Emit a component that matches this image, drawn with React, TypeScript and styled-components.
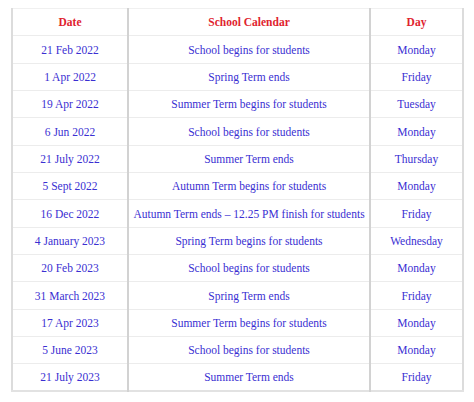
import React from "react";
import styled, { createGlobalStyle } from "styled-components";

const Global = createGlobalStyle`
  html, body { margin: 0; padding: 0; background: #ffffff; }
  body { font-family: "Liberation Serif", "DejaVu Serif", serif; }
`;

const Page = styled.div`
  padding: 8px 0 0 11px;
`;

const Table = styled.table`
  border-collapse: collapse;
  width: 451px;
  table-layout: fixed;
  border-left: 2px solid #dcdcdc;
  border-right: 2px solid #dcdcdc;
  border-top: 1px solid #f0f0f0;
  border-bottom: 2px solid #e2e2e2;
`;

const Row = styled.tr`
  height: 27.35px;
  border-bottom: 1px solid #ececec;
`;

const Cell = styled.td<{ $head?: boolean }>`
  padding: 0 4px;
  text-align: center;
  vertical-align: middle;
  font-size: 11.5px;
  white-space: nowrap;
  color: ${(p) => (p.$head ? "#e0232e" : "#3a2fd2")};
  font-weight: ${(p) => (p.$head ? 700 : 400)};
  & + & { border-left: 2px solid #d2d2d2; }
`;

const rows: [string, string, string][] = [
  ["21 Feb 2022", "School begins for students", "Monday"],
  ["1 Apr 2022", "Spring Term ends", "Friday"],
  ["19 Apr 2022", "Summer Term begins for students", "Tuesday"],
  ["6 Jun 2022", "School begins for students", "Monday"],
  ["21 July 2022", "Summer Term ends", "Thursday"],
  ["5 Sept 2022", "Autumn Term begins for students", "Monday"],
  ["16 Dec 2022", "Autumn Term ends – 12.25 PM finish for students", "Friday"],
  ["4 January 2023", "Spring Term begins for students", "Wednesday"],
  ["20 Feb 2023", "School begins for students", "Monday"],
  ["31 March 2023", "Spring Term ends", "Friday"],
  ["17 Apr 2023", "Summer Term begins for students", "Monday"],
  ["5 June 2023", "School begins for students", "Monday"],
  ["21 July 2023", "Summer Term ends", "Friday"],
];

export default function App() {
  return (
    <Page>
      <Global />
      <Table>
        <colgroup>
          <col style={{ width: 116 }} />
          <col style={{ width: 242 }} />
          <col style={{ width: 93 }} />
        </colgroup>
        <thead>
          <Row>
            <Cell as="th" $head>Date</Cell>
            <Cell as="th" $head>School Calendar</Cell>
            <Cell as="th" $head>Day</Cell>
          </Row>
        </thead>
        <tbody>
          {rows.map((r) => (
            <Row key={r[0]}>
              <Cell>{r[0]}</Cell>
              <Cell>{r[1]}</Cell>
              <Cell>{r[2]}</Cell>
            </Row>
          ))}
        </tbody>
      </Table>
    </Page>
  );
}
